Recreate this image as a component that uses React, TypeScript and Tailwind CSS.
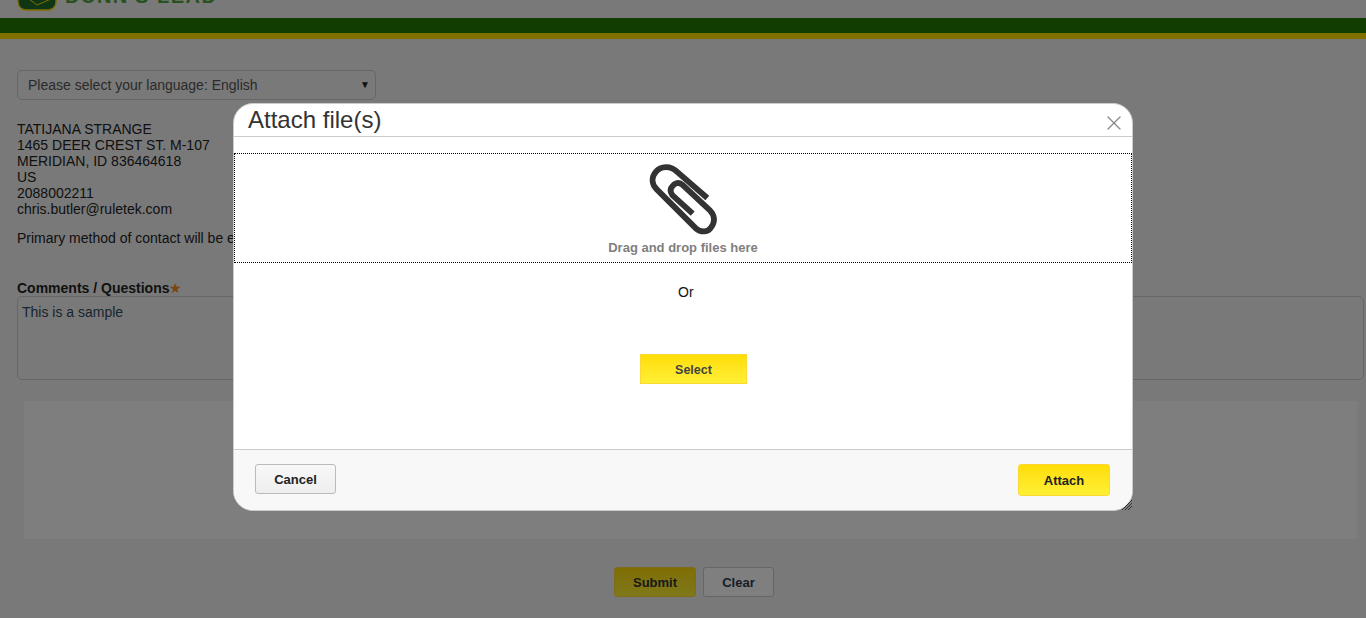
import { X } from "lucide-react";

const font = "font-['Liberation_Sans',Arial,sans-serif]";

function PageBehind() {
  return (
    <div className="min-h-[618px] bg-[#f3f3f3] text-[14px] leading-4 text-[#222]">
      <div className="flex h-[18px] items-end overflow-hidden pl-[17px]">
        <svg width="40" height="12" viewBox="0 0 40 12" className="mb-[7px] shrink-0">
          <path d="M0.8 0 C0.8 6 2 10 8 11 L32 11 C38 10 39.2 6 39.2 0 Z" fill="#1f6a2b" stroke="#ffde00" strokeWidth="1.5" />
          <path d="M12 0 L20 6 L34 0" fill="none" stroke="#ffde00" strokeWidth="1" />
        </svg>
        <span className="mb-[14px] ml-2 text-[20px] leading-4 font-bold tracking-[1.5px] whitespace-nowrap text-[#4fa33f]">
          DUNN'S LEAD
        </span>
      </div>
      <div className="h-[15px] bg-[#227a00]" />
      <div className="h-[6px] bg-[#ffe000]" />
      <div className="px-[17px] pt-[31px]">
        <div className="flex h-[30px] w-[359px] items-center justify-between rounded-[5px] border border-[#ccc] pr-[5px] pl-[10px] text-[#555]">
          <span>Please select your language: English</span>
          <span className="text-[10px] text-[#222]">▼</span>
        </div>
        <div className="mt-[21px]">
          <p>TATIJANA STRANGE</p>
          <p>1465 DEER CREST ST. M-107</p>
          <p>MERIDIAN, ID 836464618</p>
          <p>US</p>
          <p>2088002211</p>
          <p>chris.butler@ruletek.com</p>
        </div>
        <p className="mt-[13px]">Primary method of contact will be email.</p>
        <p className="mt-[34px] flex font-bold">
          Comments / Questions<span className="font-normal text-[#f08a1d]">★</span>
        </p>
        <div className="mr-[-15px] h-[84px] rounded-[5px] border border-[#ccc] px-[4px] py-[7px] text-[#34495e]">
          This is a sample
        </div>
        <div className="mt-[21px] mr-[-8px] ml-[7px] h-[138px] bg-[#fdfdfd]" />
        <div className="mt-[28px] ml-[597px] flex gap-[7px] text-[13px] font-bold">
          <div className="flex h-[30px] w-[82px] items-center justify-center rounded-[3px] border border-[#fdd835] bg-gradient-to-b from-[#ffdd00] to-[#fff033] pt-[2px] text-[#333]">
            Submit
          </div>
          <div className="flex h-[30px] w-[71px] items-center justify-center rounded-[3px] border border-[#ccc] bg-white pt-[2px] text-[#2c3e50]">
            Clear
          </div>
        </div>
      </div>
    </div>
  );
}

function AttachDialog() {
  return (
    <div className="absolute top-[103px] left-[233px] flex h-[408px] w-[900px] flex-col rounded-[20px] border border-[#ccc] bg-white text-[#222]">
      <div className="flex h-[33px] items-start justify-between border-b border-[#ccc] pl-[14px]">
        <span className="text-[24px] leading-[31px] text-[#333]">Attach file(s)</span>
        <X className="mt-[7px] mr-[6px] h-[24px] w-[24px] text-[#888]" strokeWidth={1.25} />
      </div>
      <div className="mt-[16px] flex h-[110px] flex-col items-center border border-dotted border-black">
        <svg width="68" height="72" viewBox="0 0 70 74" className="mt-[10px] -ml-[1px]" fill="none" stroke="#333" strokeWidth="6" strokeLinecap="butt" strokeLinejoin="round">
          <path d="M60 35 L29 8 C22 1 12 2 7 8 C2 14 3 21 8 26 L48 66 C54 71 61 70 64 65 C68 60 68 53 63 48 L34 21 C30 18 26 20 24 23 C21 26 22 29 24 32 L45 51" />
        </svg>
        <span className="mt-[4px] text-[13px] leading-[15px] font-bold text-[#808080]">Drag and drop files here</span>
      </div>
      <p className="mt-[21px] pl-[444px] text-[14px] leading-4 text-[#111]">Or</p>
      <div className="mt-[54px] ml-[406px] flex h-[30px] w-[107px] items-center justify-center border border-[#fdd835] bg-gradient-to-b from-[#ffdd00] to-[#fff033] pt-[2px] text-[12.5px] font-bold text-[#444]">
        Select
      </div>
      <div className="mt-auto flex h-[61px] items-start justify-between rounded-b-[19px] border-t border-[#ccc] bg-[#f8f8f8] pt-[14px] pr-[22px] pl-[21px] text-[13px] font-bold">
        <div className="flex h-[30px] w-[81px] items-center justify-center rounded-[3px] border border-[#bbb] bg-gradient-to-b from-[#f8f8f8] to-[#eeeeee] pt-px">
          Cancel
        </div>
        <div className="flex h-[32px] w-[92px] items-center justify-center rounded-[3px] border border-[#fdd835] bg-gradient-to-b from-[#ffdd00] to-[#fff033] pt-px">
          Attach
        </div>
      </div>
      <svg width="10" height="10" viewBox="0 0 10 10" className="absolute right-0 bottom-0" stroke="#333" strokeWidth="1">
        <path d="M0 10 L10 0 M3 10 L10 3 M6 10 L10 6" />
      </svg>
    </div>
  );
}

export default function App() {
  return (
    <div className={`relative h-[618px] overflow-hidden ${font}`}>
      <PageBehind />
      <div className="absolute inset-0 bg-black/50" />
      <AttachDialog />
    </div>
  );
}
